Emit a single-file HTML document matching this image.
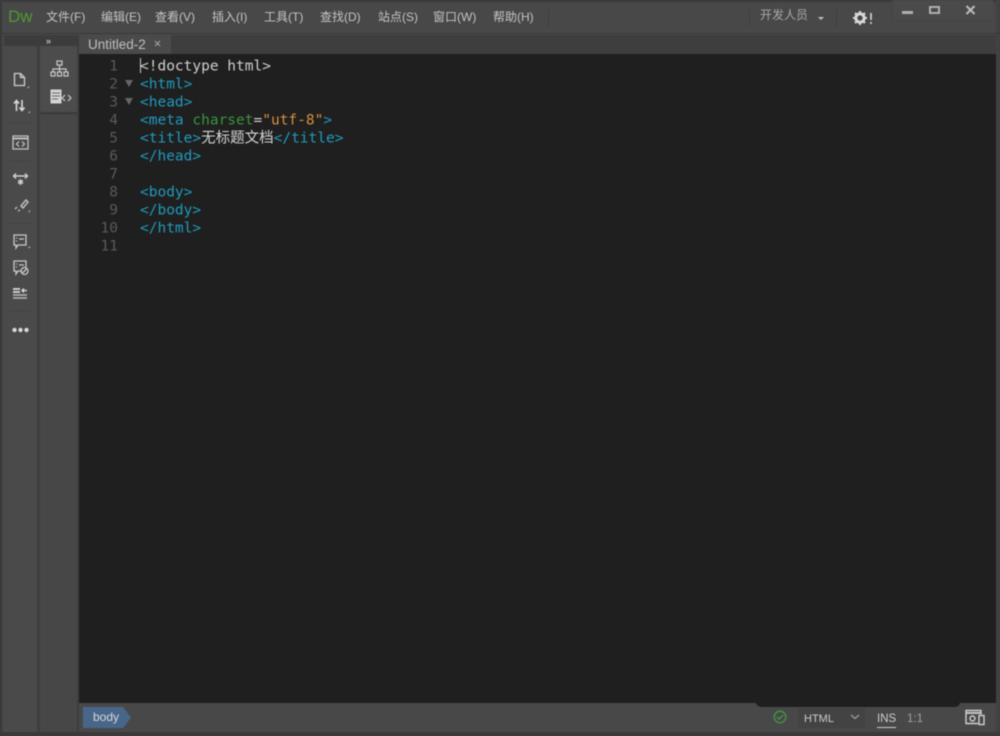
<!DOCTYPE html>
<html><head><meta charset="utf-8">
<style>
html,body{margin:0;padding:0;background:#3c3c3c;width:1000px;height:736px;overflow:hidden}
#w{position:relative;width:1000px;height:736px;overflow:hidden;background:#484848;filter:blur(.5px);font-family:"Liberation Sans","Noto Sans CJK SC",sans-serif}
.a{position:absolute}
.m{position:absolute;top:9px;font-size:12px;line-height:16px;color:#c4c4c4;white-space:nowrap}
.c{position:absolute;left:140px;font:14.5px/18px "DejaVu Sans Mono","Noto Sans CJK SC",monospace;color:#1f9abd;white-space:pre;transform:translateY(-.5px)}
.n{position:absolute;width:40px;left:78px;text-align:right;font:14.5px/18px "DejaVu Sans Mono",monospace;color:#5a5a5a;transform:translateY(-.5px)}
svg{position:absolute;overflow:visible}
</style></head><body><div id="w">
<div class="a" style="left:0;top:0;width:1000px;height:2px;background:#3a3a3a"></div>
<div class="a" style="left:0;top:0;width:2px;height:736px;background:#3a3a3a"></div>
<div class="a" style="right:0;top:0;width:4px;height:736px;background:#424242"></div>
<div class="a" style="left:0;top:732px;width:1000px;height:4px;background:#3a3a3a"></div>

<div class="a" style="left:8px;top:6px;font-size:17px;line-height:22px;color:#4f9a2e">Dw</div>
<div class="m" style="left:46px">文件(F)</div>
<div class="m" style="left:101px">编辑(E)</div>
<div class="m" style="left:155px">查看(V)</div>
<div class="m" style="left:212px">插入(I)</div>
<div class="m" style="left:264px">工具(T)</div>
<div class="m" style="left:320px">查找(D)</div>
<div class="m" style="left:378px">站点(S)</div>
<div class="m" style="left:433px">窗口(W)</div>
<div class="m" style="left:493px">帮助(H)</div>
<div class="a" style="left:548px;top:8px;width:1px;height:18px;background:#3e3e3e"></div>
<div class="a" style="left:749px;top:8px;width:1px;height:18px;background:#3e3e3e"></div>
<div class="a" style="left:836px;top:8px;width:1px;height:18px;background:#3e3e3e"></div>
<div class="m" style="left:760px;top:7px;color:#a8a8a8">开发人员</div>
<div class="a" style="left:818px;top:17px;border:3px solid transparent;border-top:3px solid #c0c0c0;border-bottom:0"></div>
<svg style="left:853px;top:11px" width="22" height="16" viewBox="0 0 22 16"><circle cx="7" cy="7" r="4.2" fill="none" stroke="#d8d8d8" stroke-width="3"/><path d="M7 0v3M7 11v3M0 7h3M11 7h3M2 2l2 2M10 10l2 2M12 2l-2 2M4 10l-2 2" stroke="#d8d8d8" stroke-width="2"/><path d="M18 2v7M18 11v2" stroke="#d8d8d8" stroke-width="1.6"/></svg>
<div class="a" style="left:892px;top:0;width:100px;height:20px;background:#4a4a4a;border-bottom:1px solid #434343;border-left:1px solid #434343"></div>
<div class="a" style="left:902px;top:11px;width:11px;height:3px;background:#b0b0b0"></div>
<div class="a" style="left:929px;top:6px;width:7px;height:4px;border:2px solid #b0b0b0"></div>
<svg style="left:965px;top:5px" width="12" height="11"><path d="M1.5 1l8 8M9.5 1l-8 8" stroke="#bcbcbc" stroke-width="2"/></svg>

<div class="a" style="left:0;top:33px;width:1000px;height:1px;background:#383838"></div>
<div class="a" style="left:4px;top:34px;width:992px;height:1px;background:#4a4a4a"></div>
<div class="a" style="left:4px;top:35px;width:75px;height:11px;background:#3c3c3c"></div>
<div class="a" style="left:79px;top:35px;width:917px;height:19px;background:#3e3e3e"></div>
<div class="a" style="left:79px;top:35px;width:92px;height:19px;background:#4a4a4a"></div>
<div class="a" style="left:88px;top:37px;font-size:13.500px;line-height:16px;color:#bebebe">Untitled-2</div>
<svg style="left:154px;top:40px" width="8" height="8"><path d="M1 1l5 5M6 1l-5 5" stroke="#a0a0a0" stroke-width="1.2"/></svg>
<div class="a" style="left:46px;top:37px;font-size:9px;line-height:8px;color:#c0c0c0;font-weight:bold">»</div>

<div class="a" style="left:4px;top:46px;width:33px;height:686px;background:#4a4a4a"></div>
<div class="a" style="left:37px;top:46px;width:3px;height:686px;background:#3e3e3e"></div>
<div class="a" style="left:40px;top:46px;width:37px;height:686px;background:#474747"></div>
<div class="a" style="left:40px;top:46px;width:37px;height:66px;background:#4c4c4c"></div>
<div class="a" style="left:40px;top:112px;width:37px;height:2px;background:#3a3a3a"></div>
<div class="a" style="left:77px;top:46px;width:2px;height:686px;background:#3e3e3e"></div>

<svg style="left:50px;top:60px" width="20" height="18" fill="none" stroke="#cacaca" stroke-width="1.2"><rect x="7" y="1" width="5" height="4"/><path d="M9.5 5v4M3 12V9h13v3M9.5 9v3"/><rect x="1" y="12" width="4" height="4"/><rect x="7.5" y="12" width="4" height="4"/><rect x="14" y="12" width="4" height="4"/></svg>
<svg style="left:50px;top:89px" width="22" height="16"><rect x="0.5" y="0.5" width="11" height="14" fill="#d4d4d4"/><path d="M2 4h8M2 7h8M2 10h6" stroke="#666" stroke-width="1"/><path d="M15 6l-3 3 3 3M18 6l3 3-3 3" fill="none" stroke="#c8c8c8" stroke-width="1.2"/></svg>

<svg style="left:13px;top:72px" width="18" height="18" fill="none" stroke="#d0d0d0" stroke-width="1.3"><path d="M1.5 1.5h6l4 4v8h-10zM7.5 1.5v4h4"/><path d="M14 16l2 0v-2z" fill="#bbb" stroke="none"/></svg>
<svg style="left:13px;top:99px" width="18" height="18" fill="none" stroke="#d8d8d8" stroke-width="1.6"><path d="M3.5 12V2M1 4.5l2.5-3 2.5 3M9 1v10M6.5 8.5l2.500 3 2.500-3"/><path d="M15 14l2 0v-2z" fill="#bbb" stroke="none"/></svg>
<svg style="left:12px;top:135px" width="17" height="15" fill="none" stroke="#c8c8c8" stroke-width="1.200"><rect x="1" y="1" width="15" height="13"/><path d="M1 3.500h15" stroke-width="1.800"/><path d="M7 6.500L4.500 9 7 11.500M10 6.500L12.500 9 10 11.500"/></svg>
<svg style="left:12px;top:171px" width="17" height="16" fill="none" stroke="#d0d0d0" stroke-width="1.400"><path d="M1.500 5h14M4 2.500L1.500 5 4 7.500M13 2.500L15.500 5 13 7.500"/><path d="M8.500 8v6M6 9.500l5 3M11 9.500l-5 3"/></svg>
<svg style="left:13px;top:198px" width="18" height="16" fill="none" stroke="#bdbdbd" stroke-width="1.500"><path d="M8 8l5-6 2 2-5 6z"/><path d="M2 11l2-2M5 13l2-1"/><path d="M15 14l2 0v-2z" fill="#bbb" stroke="none"/></svg>
<svg style="left:13px;top:234px" width="18" height="17" fill="none" stroke="#c8c8c8" stroke-width="1.300"><path d="M1 1h12v10H5l-2 3v-3H1z"/><path d="M3.500 3.500v1M3.500 6.500v1M6 5h5"/><path d="M15 14l2 0v-2z" fill="#bbb" stroke="none"/></svg>
<svg style="left:13px;top:260px" width="18" height="17" fill="none" stroke="#c8c8c8" stroke-width="1.300"><path d="M9 11H5l-2 3v-3H1V1h12v6"/><path d="M3.500 3.500v1M3.500 6.500v1M6 5h5"/><circle cx="11.500" cy="11" r="3.500"/><path d="M9.500 13l4-4"/></svg>
<svg style="left:13px;top:287px" width="15" height="13"><path d="M0 2h7M0 5h7" stroke="#dcdcdc" stroke-width="1.800"/><path d="M9 3.500h5M11 1.500l-2 2 2 2" fill="none" stroke="#dcdcdc" stroke-width="1.300"/><path d="M0 8h14M0 11h14" stroke="#b8b8b8" stroke-width="1.600"/></svg>
<div class="a" style="left:8px;top:122px;width:24px;height:1px;background:#444"></div>
<div class="a" style="left:8px;top:161px;width:24px;height:1px;background:#444"></div>
<div class="a" style="left:8px;top:223px;width:24px;height:1px;background:#444"></div>
<div class="a" style="left:8px;top:310px;width:24px;height:1px;background:#444"></div>
<svg style="left:12px;top:327px" width="17" height="6" fill="#d8d8d8"><circle cx="2.500" cy="3" r="2.200"/><circle cx="8.500" cy="3" r="2.200"/><circle cx="14.500" cy="3" r="2.200"/></svg>

<div class="a" style="left:79px;top:54px;width:917px;height:649px;background:#1f1f1f"></div>
<div class="a" style="left:755px;top:700px;width:205px;height:7px;background:#1f1f1f;border-radius:0 0 40px 60px"></div>

<div class="n" style="top:58px">1</div>
<div class="n" style="top:76px">2</div>
<div class="n" style="top:94px">3</div>
<div class="n" style="top:112px">4</div>
<div class="n" style="top:130px">5</div>
<div class="n" style="top:148px">6</div>
<div class="n" style="top:166px">7</div>
<div class="n" style="top:184px">8</div>
<div class="n" style="top:202px">9</div>
<div class="n" style="top:220px">10</div>
<div class="n" style="top:238px">11</div>
<div class="a" style="left:125px;top:80px;border:4px solid transparent;border-top:7px solid #666;border-bottom:0"></div>
<div class="a" style="left:125px;top:98px;border:4px solid transparent;border-top:7px solid #666;border-bottom:0"></div>

<div class="a" style="left:140px;top:58px;width:1px;height:15px;background:#ccc"></div>
<div class="c" style="top:58px;color:#cfcfcf">&lt;!doctype html&gt;</div>
<div class="c" style="top:76px">&lt;html&gt;</div>
<div class="c" style="top:94px">&lt;head&gt;</div>
<div class="c" style="top:112px">&lt;meta <span style="color:#3a9440">charset</span><span style="color:#c8c8c8">=</span><span style="color:#d8903c">"utf-8"</span>&gt;</div>
<div class="c" style="top:130px">&lt;title&gt;<span style="color:#d4d4d4">无标题文档</span>&lt;/title&gt;</div>
<div class="c" style="top:148px">&lt;/head&gt;</div>
<div class="c" style="top:184px">&lt;body&gt;</div>
<div class="c" style="top:202px">&lt;/body&gt;</div>
<div class="c" style="top:220px">&lt;/html&gt;</div>

<svg style="left:83px;top:707px" width="50" height="22"><path d="M0 0h40l8 10.500-8 10.500H0z" fill="#47668a"/></svg>
<div class="a" style="left:93px;top:709px;font-size:12px;line-height:16px;color:#d8d8d8">body</div>

<svg style="left:773px;top:710px" width="14" height="14" fill="none" stroke="#3f9a46" stroke-width="1.300"><circle cx="7" cy="7" r="5.800"/><path d="M4 7l2.200 2.200L10 5"/></svg>
<div class="a" style="left:798px;top:708px;width:67px;height:20px;background:#434343"></div>
<div class="a" style="left:804px;top:711px;font-size:11px;line-height:16px;color:#cccccc">HTML</div>
<svg style="left:850px;top:714px" width="10" height="6" fill="none" stroke="#a0a0a0" stroke-width="1.200"><path d="M1 1l4 3.500L9 1"/></svg>
<div class="a" style="left:877px;top:711px;font-size:11.500px;line-height:16px;color:#cccccc;border-bottom:1px solid #cccccc">INS</div>
<div class="a" style="left:907px;top:711px;font-size:11.500px;line-height:16px;color:#a0a0a0">1:1</div>
<svg style="left:965px;top:709px" width="20" height="17" fill="none" stroke="#d0d0d0" stroke-width="1.400"><path d="M13 14.500H1V1.500h15v4"/><path d="M1 4h15" stroke-width="1.800"/><circle cx="7.500" cy="9.500" r="2.500"/><rect x="14" y="6.500" width="5" height="9"/></svg>
</div></body></html>
